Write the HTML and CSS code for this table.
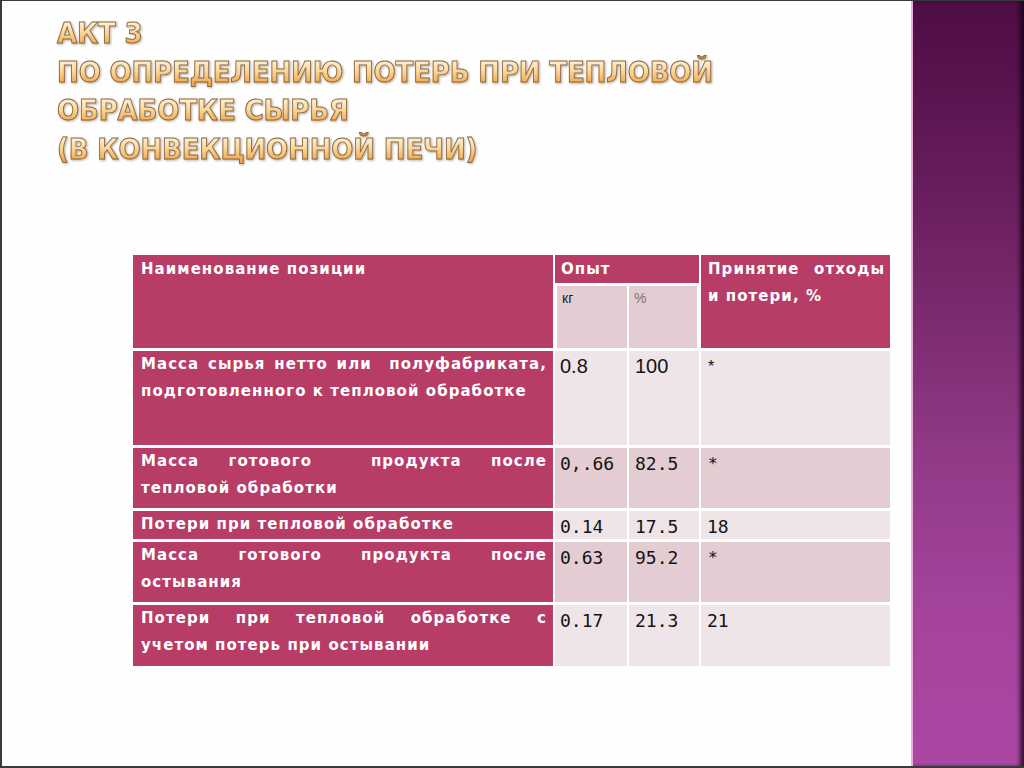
FILE: index.html
```html
<!DOCTYPE html>
<html lang="ru">
<head>
<meta charset="utf-8">
<title>Акт 3</title>
<link rel="stylesheet" href="styles.css">
</head>
<body>
<div class="slide">
  <main class="content">
    <h1 class="title">АКТ 3<br>ПО ОПРЕДЕЛЕНИЮ ПОТЕРЬ ПРИ ТЕПЛОВОЙ<br>ОБРАБОТКЕ СЫРЬЯ<br>(В КОНВЕКЦИОННОЙ ПЕЧИ)</h1>
    <div class="tbl">
      <div class="cell head name">Наименование позиции</div>
      <div class="cell head exp">Опыт</div>
      <div class="cell head accept">Принятие&nbsp; отходы и потери, %</div>
      <div class="cell sub kg">кг</div>
      <div class="cell sub pct">%</div>

      <div class="cell label">Масса сырья нетто или&nbsp; полуфабриката, подготовленного к тепловой обработке</div>
      <div class="cell val light big">0.8</div>
      <div class="cell val light big">100</div>
      <div class="cell val light big star">*</div>

      <div class="cell label">Масса готового&nbsp; продукта после тепловой обработки</div>
      <div class="cell val dark">0,.66</div>
      <div class="cell val dark">82.5</div>
      <div class="cell val dark star">*</div>

      <div class="cell label">Потери при тепловой обработке</div>
      <div class="cell val light">0.14</div>
      <div class="cell val light">17.5</div>
      <div class="cell val light">18</div>

      <div class="cell label">Масса готового продукта после остывания</div>
      <div class="cell val dark">0.63</div>
      <div class="cell val dark">95.2</div>
      <div class="cell val dark star">*</div>

      <div class="cell label"><span class="line">Потери при тепловой обработке с</span>учетом потерь при остывании</div>
      <div class="cell val light">0.17</div>
      <div class="cell val light">21.3</div>
      <div class="cell val light">21</div>
    </div>
  </main>
  <aside class="band"></aside>
</div>
</body>
</html>
```

FILE: styles.css
```css
html, body {
  margin: 0;
  padding: 0;
  background: #fefefe;
}

.slide {
  box-sizing: border-box;
  width: 1024px;
  height: 768px;
  display: flex;
  border: 2px solid #3a3a3a;
  border-top-width: 1px;
  border-right: none;
  background: #fefefe;
  overflow: hidden;
}

.content {
  flex: 1;
  padding: 13px 0 0 55px;
}

.title {
  margin: 0;
  font-family: "DejaVu Sans", sans-serif;
  font-stretch: condensed;
  font-weight: bold;
  font-size: 29px;
  line-height: 38.5px;
  letter-spacing: -0.2px;
  background: linear-gradient(180deg, #fff3d8 0%, #fbd79a 30%, #f2a746 62%, #e68f2a 100%);
  background-size: 100% 38.5px;
  background-position: 0 7px;
  -webkit-background-clip: text;
  background-clip: text;
  -webkit-text-fill-color: transparent;
  -webkit-text-stroke: 0.9px #8a6a4c;
  filter: drop-shadow(1px 1.5px 1px rgba(60, 40, 20, 0.35));
  width: max-content;
}

.tbl {
  display: grid;
  grid-template-columns: 420px 72px 70px 189px;
  grid-template-rows: 28px 62px 94px 60px 28px 60px 61px;
  column-gap: 2px;
  row-gap: 3px;
  margin: 87px 0 0 76px;
  width: 757px;
}

.cell {
  box-sizing: border-box;
  line-height: 27px;
}

.head, .label {
  background: #b73c66;
  color: #ffffff;
  font-family: "DejaVu Sans", sans-serif;
  font-weight: bold;
  font-size: 15px;
  letter-spacing: 1.05px;
}

.name {
  grid-column: 1;
  grid-row: 1 / 3;
  padding: 1px 6px 0 8px;
}

.exp {
  grid-column: 2 / 4;
  grid-row: 1;
  padding: 1px 6px 0 6px;
}

.accept {
  grid-column: 4;
  grid-row: 1 / 3;
  padding: 1px 5px 0 7px;
  text-align: justify;
}

.sub {
  background: #e3cdd2;
  font-family: "Liberation Sans", sans-serif;
  font-size: 14px;
  padding: 0 4px 0 5px;
  line-height: 24px;
}

.kg {
  color: #222;
  margin-left: 2px;
}

.pct {
  color: #777;
  font-weight: 300;
  margin-right: 2px;
}

.label {
  padding: 0 6px 0 8px;
  text-align: justify;
}

.line {
  display: block;
  text-align-last: justify;
}

.val {
  font-family: "DejaVu Sans Mono", monospace;
  font-size: 18px;
  color: #141414;
  padding: 2px 4px 0 6px;
}

.val:nth-child(4n+3) {
  padding-left: 5px;
}

.big {
  font-family: "Liberation Sans", sans-serif;
  font-size: 20px;
}

.star {
  padding-left: 7px;
  font-size: 16px;
}

.light {
  background: #efe4e7;
}

.dark {
  background: #e3cdd2;
}

.band {
  width: 111px;
  flex: none;
  background: linear-gradient(180deg, #4e0c44 0%, #621a58 20%, #7a2a6e 40%, #923a88 60%, #a5439c 80%, #ab47a3 100%);
  border-left: 2px solid #e8b0d8;
  box-shadow: inset -5px 0 4px -1px rgba(20, 0, 20, 0.75);
}
```
